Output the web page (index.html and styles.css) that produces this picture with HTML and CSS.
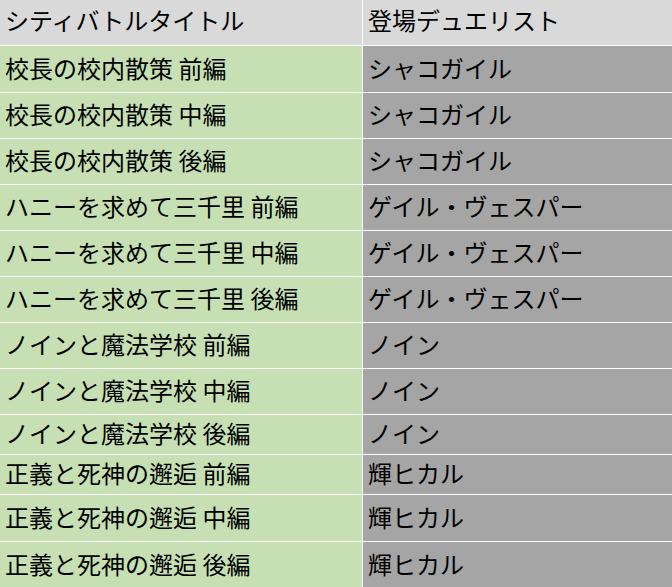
FILE: index.html
```html
<!DOCTYPE html>
<html lang="ja">
<head>
<meta charset="utf-8">
<link rel="stylesheet" href="styles.css">
</head>
<body>
<div class="sheet">
  <div class="cell head">シティバトルタイトル</div>
  <div class="cell head">登場デュエリスト</div>

  <div class="cell title">校長の校内散策 前編</div>
  <div class="cell duelist">シャコガイル</div>
  <div class="cell title">校長の校内散策 中編</div>
  <div class="cell duelist">シャコガイル</div>
  <div class="cell title">校長の校内散策 後編</div>
  <div class="cell duelist">シャコガイル</div>

  <div class="cell title">ハニーを求めて三千里 前編</div>
  <div class="cell duelist">ゲイル・ヴェスパー</div>
  <div class="cell title">ハニーを求めて三千里 中編</div>
  <div class="cell duelist">ゲイル・ヴェスパー</div>
  <div class="cell title">ハニーを求めて三千里 後編</div>
  <div class="cell duelist">ゲイル・ヴェスパー</div>

  <div class="cell title">ノインと魔法学校 前編</div>
  <div class="cell duelist">ノイン</div>
  <div class="cell title">ノインと魔法学校 中編</div>
  <div class="cell duelist">ノイン</div>
  <div class="cell title">ノインと魔法学校 後編</div>
  <div class="cell duelist">ノイン</div>

  <div class="cell title">正義と死神の邂逅 前編</div>
  <div class="cell duelist">輝ヒカル</div>
  <div class="cell title">正義と死神の邂逅 中編</div>
  <div class="cell duelist">輝ヒカル</div>
  <div class="cell title">正義と死神の邂逅 後編</div>
  <div class="cell duelist">輝ヒカル</div>
</div>
</body>
</html>
```

FILE: styles.css
```css
html, body {
  margin: 0;
  padding: 0;
  background: #ffffff;
}

.sheet {
  display: grid;
  grid-template-columns: 362px 1fr;
  grid-template-rows: 45px 46px repeat(7, 45px) 39px 39px 46px 46px;
  column-gap: 1px;
  row-gap: 1px;
  width: 672px;
  height: 587px;
  overflow: hidden;
  font-family: "Noto Sans CJK JP", "Noto Sans", sans-serif;
  font-size: 24px;
  color: #000000;
}

.cell {
  display: flex;
  align-items: center;
  padding-left: 5px;
  padding-bottom: 3px;
  white-space: nowrap;
  overflow: hidden;
  line-height: 1;
}

.head {
  background: #d9d9d9;
  padding-bottom: 5px;
}

.title {
  background: #c6e0b4;
}

.duelist {
  background: #a5a5a5;
}
```
